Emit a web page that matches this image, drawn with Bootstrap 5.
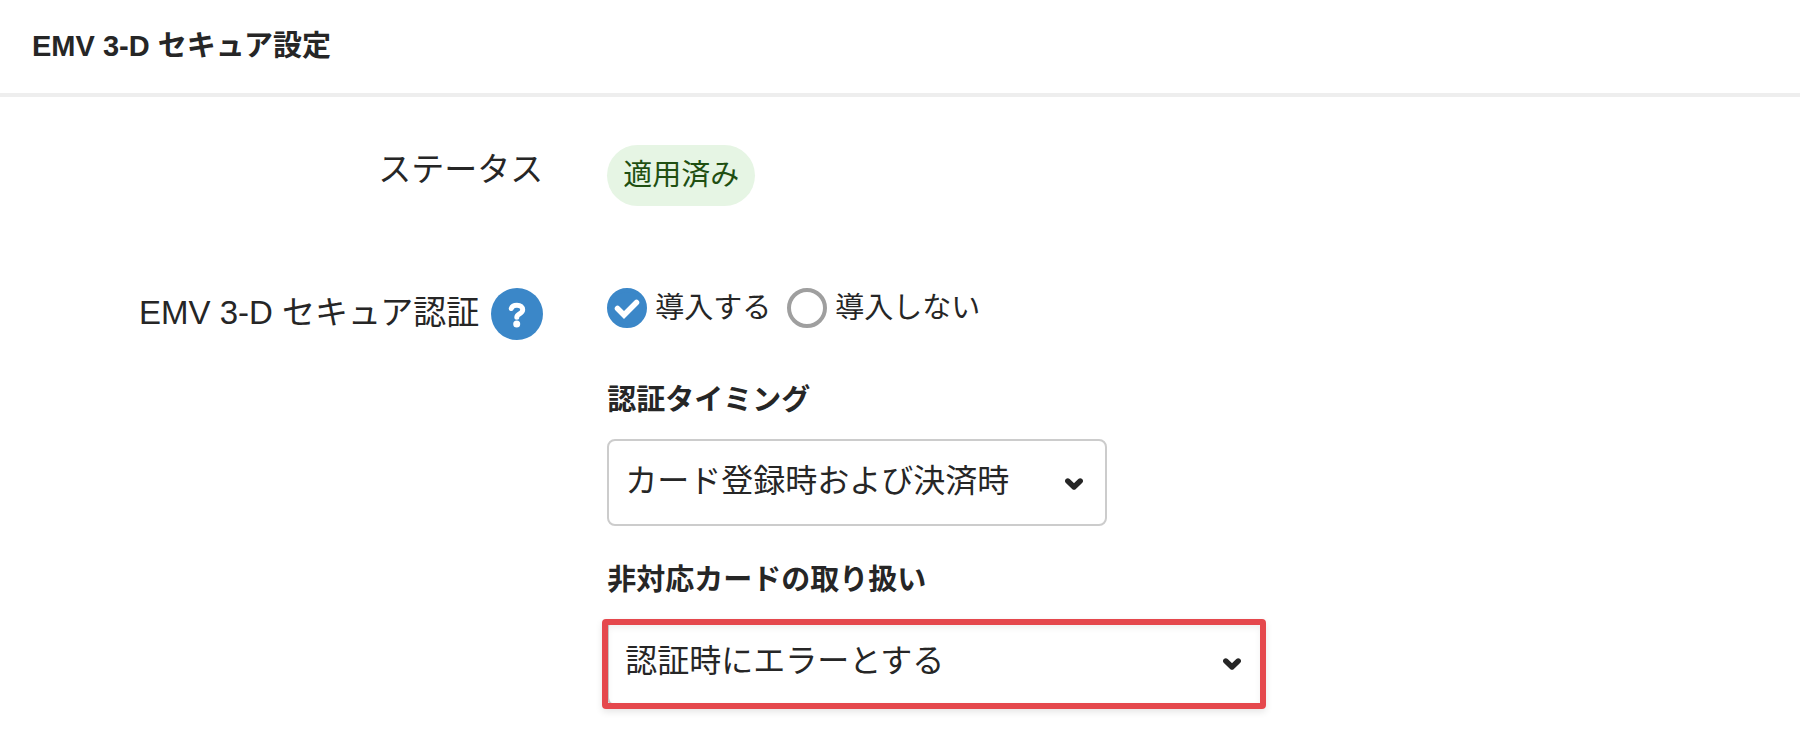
<!DOCTYPE html>
<html lang="ja">
<head>
<meta charset="utf-8">
<meta name="viewport" content="width=device-width, initial-scale=1">
<title>EMV 3-D セキュア設定</title>
<link href="https://cdn.jsdelivr.net/npm/bootstrap@5.3.0/dist/css/bootstrap.min.css" rel="stylesheet">
<style>
  body { font-family: "Liberation Sans", "Noto Sans CJK JP", sans-serif; font-size: 29px; line-height: 40px; color: #262626; }
  .page-head { padding: 26px 32px 27px; border-bottom: 4px solid #eee; }
  .page-title { font-size: 29px; line-height: 40px; font-weight: 700; }
  .settings { padding: 48px 22px 24px; }
  .field-name { font-size: 33px; line-height: 50px; padding-right: 64px; }
  .status-pill { font-size: 29px; line-height: 29px; font-weight: 400; padding: 16px; color: #1f4f12; background: #e6f5e4; }
  .setting-row + .setting-row { margin-top: 82px; }
  .name-help { gap: 12px; }
  .help-btn { width: 52px; height: 52px; }
  .choice { gap: 8px; }
  .choice .form-check-input { width: 40px; height: 40px; margin: 0; float: none; border: 4px solid #9f9f9f; flex: none; }
  .choice .form-check-input:checked { background-color: #3b87c8; border-color: #3b87c8; background-size: 32px 32px;
    background-image: url("data:image/svg+xml,%3Csvg xmlns='http://www.w3.org/2000/svg' viewBox='0 0 32 32'%3E%3Cpath d='M6.500 16.500l6.500 6.500L25.500 10.500' fill='none' stroke='%23fff' stroke-width='5.500' stroke-linecap='round' stroke-linejoin='miter'/%3E%3C/svg%3E"); }
  .sub-field { margin-top: 50px; }
  .sub-field + .sub-field { margin-top: 32px; }
  .sub-label { line-height: 44px; margin-bottom: 17px; }
  .select-box { position: relative; max-width: 100%; }
  .select-timing { width: 500px; }
  .select-unsupported { width: 658px; }
  .select-box .form-select { height: 87px; padding: 14px 64px 18px 16px; font-size: 32px; line-height: 48px; color: #262626; border: 2px solid #ccc; border-radius: 8px;
    background-position: right 22px top 37px; background-size: 18px 13px;
    background-image: url("data:image/svg+xml,%3Csvg xmlns='http://www.w3.org/2000/svg' viewBox='0 0 18 13'%3E%3Cpath d='M2.800 3l6.200 6 6.200-6' fill='none' stroke='%23262626' stroke-width='5.400' stroke-linecap='round' stroke-linejoin='round'/%3E%3C/svg%3E"); }
  .marked::after { content: ""; position: absolute; inset: 0 -1px -3px -5px; border: 6px solid #e5484d; border-radius: 4px; box-shadow: 0 3px 7px rgba(0,0,0,.1), inset 0 3px 6px rgba(0,0,0,.06); pointer-events: none; }
</style>
</head>
<body>
<header class="page-head">
  <h1 class="page-title mb-0">EMV 3-D セキュア設定</h1>
</header>
<main class="container-fluid settings">
  <div class="row g-0 setting-row">
    <div class="col-4 field-name text-end">ステータス</div>
    <div class="col-8 d-flex"><span class="badge rounded-pill status-pill">適用済み</span></div>
  </div>
  <form class="row g-0 setting-row">
    <div class="col-4 field-name name-help d-flex justify-content-end align-items-start">
      <span id="auth-name">EMV 3-D セキュア認証</span>
      <button type="button" class="btn p-0 border-0 rounded-circle d-flex help-btn" aria-label="ヘルプ">
        <svg width="52" height="52" viewBox="0 0 52 52" aria-hidden="true">
          <circle cx="26" cy="26" r="26" fill="#3b87c8"/>
          <path d="M20.300 20.500C21 18.300 23 17.300 26 17.300c3.500 0 5.700 1.700 5.700 4.500 0 4-5.900 4.200-5.900 7.500" fill="none" stroke="#fff" stroke-width="5" stroke-linecap="round" stroke-linejoin="round"/>
          <circle cx="25.700" cy="36" r="3.500" fill="#fff"/>
        </svg>
      </button>
    </div>
    <div class="col-8">
      <div class="d-flex gap-3" role="radiogroup" aria-labelledby="auth-name">
        <div class="d-flex align-items-center choice">
          <input class="form-check-input" type="radio" name="auth" id="auth-on" checked>
          <label for="auth-on">導入する</label>
        </div>
        <div class="d-flex align-items-center choice">
          <input class="form-check-input" type="radio" name="auth" id="auth-off">
          <label for="auth-off">導入しない</label>
        </div>
      </div>
      <div class="sub-field">
        <label class="d-block fw-bold sub-label" for="timing">認証タイミング</label>
        <div class="select-box select-timing">
          <select class="form-select" id="timing"><option>カード登録時および決済時</option></select>
        </div>
      </div>
      <div class="sub-field">
        <label class="d-block fw-bold sub-label" for="unsupported">非対応カードの取り扱い</label>
        <div class="select-box select-unsupported marked">
          <select class="form-select" id="unsupported"><option>認証時にエラーとする</option></select>
        </div>
      </div>
    </div>
  </form>
</main>
<script src="https://cdn.jsdelivr.net/npm/bootstrap@5.3.0/dist/js/bootstrap.bundle.min.js"></script>
</body>
</html>
